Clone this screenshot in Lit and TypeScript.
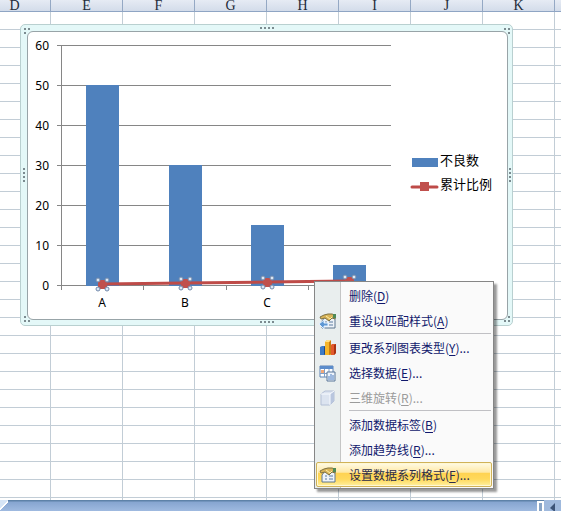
import { LitElement, html, svg, css, nothing } from "lit";
import { customElement } from "lit/decorators.js";
import { classMap } from "lit/directives/class-map.js";

const columns = ["D", "E", "F", "G", "H", "I", "J", "K", "L"];
const ticks = [0, 10, 20, 30, 40, 50, 60];
const bars = [
  { name: "A", value: 50, line: 0.25 },
  { name: "B", value: 30, line: 0.5 },
  { name: "C", value: 15, line: 0.75 },
  { name: "", value: 5, line: 1 },
];

const formatIcon = svg`
  <path d="M6 5h10v11H3V9z" fill="#eef3f8" stroke="#5f7690"/>
  <path d="M6 10h2M6 13h2M10 10h4M10 13h4" stroke="#5b7ba0"/>
  <path d="M1 5l4-2 4-1 4 0 3 1v4l-3-1-3 3-4-3-4 1z" fill="#d9b458" stroke="#7d7040"/>
  <path d="M7 4l4 3 2-2" fill="none" stroke="#fff0a8"/>
  <path d="M14 2h3v4h-3z" fill="#4f8a56"/>`;

const icons: Record<string, unknown> = {
  reset: svg`${formatIcon}
    <path d="M0 12l5-4v3h4v3H5v3z" fill="#5d97d4" stroke="#e2f0ff"/>`,
  format: formatIcon,
  chart: svg`
    <path d="M1 8l2-1h3v9H1z" fill="#3d7bc7"/><path d="M5 8l1-1v8l-1 1z" fill="#1d4b8c"/>
    <path d="M6 3l2-2h4v15H6z" fill="#f5b52a"/><path d="M10 3l2-2v14l-2 1z" fill="#c97c12"/><path d="M6 3l2-2h4l-2 2z" fill="#ffe088"/>
    <path d="M12 6l1-1h4v9l-2 2h-3z" fill="#e25a2c"/><path d="M15 6l2-1v9l-2 2z" fill="#a93212"/>`,
  select: svg`
    <path d="M1 2h13v11H1z" fill="#fff" stroke="#5d82b5"/>
    <path d="M1 2h13v3H1z" fill="#5b8ccb"/><path d="M2 6h3v3H2z" fill="#f2a878"/>
    <path d="M1 9.500h13M5.500 5v8M10 5v8" stroke="#7f9fc8"/>
    <path d="M8 8h8v9H8z" fill="#eef4fc" stroke="#5b7698"/>
    <path d="M10 12v4M12 10v6M14 11v5" stroke="#4f7fc1"/>`,
  cube: svg`
    <path d="M2 5l4-3h9v10l-4 4H2z" fill="#dce4f0" stroke="#b4c0d6"/>
    <path d="M11 5l4-3v10l-4 4z" fill="#b9c6de"/>
    <path d="M2 5h9v11M11 5l4-3" fill="none" stroke="#f8fbff"/>`,
};

interface Item {
  text?: string;
  key?: string;
  more?: boolean;
  icon?: string;
  disabled?: boolean;
  active?: boolean;
}

const items: Item[] = [
  { text: "删除", key: "D" },
  { text: "重设以匹配样式", key: "A", icon: "reset" },
  {},
  { text: "更改系列图表类型", key: "Y", more: true, icon: "chart" },
  { text: "选择数据", key: "E", more: true, icon: "select" },
  { text: "三维旋转", key: "R", more: true, icon: "cube", disabled: true },
  {},
  { text: "添加数据标签", key: "B" },
  { text: "添加趋势线", key: "R", more: true },
  { text: "设置数据系列格式", key: "F", more: true, icon: "format", active: true },
];

@customElement("context-menu")
export class ContextMenu extends LitElement {
  static styles = css`
    :host {
      display: block;
      box-sizing: border-box;
      padding: 1px;
      border: 1px solid #868686;
      background: linear-gradient(90deg, #e9eeee 25px, #c5c5c5 25px, #c5c5c5 26px, #fafafa 26px);
      box-shadow: 3px 3px 2px rgba(0, 0, 0, 0.4);
    }
    .item {
      display: grid;
      grid-template-columns: 26px 1fr;
      align-items: center;
      gap: 5px;
      box-sizing: border-box;
      width: 100%;
      height: 25px;
      padding: 0 0 0 1px;
      border: 1px solid transparent;
      border-radius: 2px;
      background: none;
      color: #10186c;
      font: 12px/20px "Noto Sans CJK SC", sans-serif;
      text-align: left;
      white-space: nowrap;
    }
    .item:disabled {
      color: #9b9b9b;
    }
    .active {
      border-color: #d0b258;
      box-shadow: inset 0 0 0 1px #fff8d4;
      background: linear-gradient(#fffbe6, #ffe9a6 40%, #ffd352 45%, #ffd95c 70%, #fff0a0);
      color: #2b2b4a;
    }
    .icon {
      display: block;
      width: 18px;
      height: 18px;
      margin-left: 1px;
    }
    .key {
      text-decoration: underline;
      text-underline-offset: 2px;
    }
    .rule {
      height: 1px;
      margin: 0 1px 1px 33px;
      border: 0;
      background: #c0c0c4;
    }
  `;

  render() {
    return items.map((i) =>
      i.text
        ? html`<button class=${classMap({ item: true, active: !!i.active })} ?disabled=${!!i.disabled}>
            <span>${i.icon ? html`<svg class="icon" viewBox="0 0 18 18" aria-hidden="true">${icons[i.icon]}</svg>` : nothing}</span>
            <span>${i.text}(<span class="key">${i.key}</span>)${i.more ? "..." : ""}</span>
          </button>`
        : html`<hr class="rule" />`
    );
  }
}

@customElement("series-chart")
export class SeriesChart extends LitElement {
  static styles = css`
    :host {
      display: block;
      position: relative;
      box-sizing: border-box;
      padding: 6px 4px 5px 6px;
      border: 1px solid #b9d0d0;
      border-radius: 5px;
      background: #e4f8f8;
    }
    .area {
      display: flex;
      border: 1px solid #98a4a8;
      border-radius: 6px;
      background: #fff;
    }
    .plot {
      display: block;
      flex: none;
      width: 372px;
      height: 287px;
      font: 12px "Noto Sans", sans-serif;
    }
    .legend {
      display: flex;
      flex-direction: column;
      gap: 4px;
      margin: 0;
      padding: 118px 0 0 10px;
      list-style: none;
      font: 13px/20px "Noto Sans CJK SC", sans-serif;
      color: #000;
    }
    .entry {
      display: flex;
      align-items: center;
      gap: 1px;
      white-space: nowrap;
    }
    .swatch {
      display: block;
      width: 29px;
      height: 14px;
    }
    .grip {
      position: absolute;
      display: grid;
      gap: 2px;
    }
    .grip i {
      width: 2px;
      height: 2px;
      background: #7b8b90;
    }
    .top, .bottom { left: 239px; grid-auto-flow: column; }
    .top { top: 2px; }
    .bottom { bottom: 2px; }
    .left, .right { top: 143px; }
    .left { left: 2px; }
    .right { right: 1px; }
    .corner { grid-template-columns: 2px 2px; }
    .nw { left: 3px; top: 3px; }
    .ne { right: 2px; top: 3px; direction: rtl; }
    .sw { left: 3px; bottom: 3px; }
    .se { right: 2px; bottom: 3px; direction: rtl; }
    .sw i:nth-child(2), .se i:nth-child(2) { grid-column: 1; }
  `;

  private plot() {
    const y = (v: number) => 253 - v * 4;
    const x = (i: number) => Math.round(74.3 + i * 82.3);
    return html`<svg class="plot" viewBox="0 0 372 287" role="img" aria-label="不良数 / 累计比例">
      <g stroke="#868686" shape-rendering="crispEdges">
        ${ticks.map((v) => svg`<path d="M29 ${y(v) + 0.5}H363"/>`)}
        <path d="M33.500 13V258" />
        ${[115, 198, 280, 362].map((t) => svg`<path d="M${t + 0.5} 253v5"/>`)}
      </g>
      ${bars.map((b, i) => svg`<rect x=${x(i) - 16} y=${y(b.value)} width="33" height=${b.value * 4 + 1} fill="#4f81bd"/>`)}
      <polyline points=${bars.map((b, i) => `${x(i)},${y(b.line)}`).join(" ")} fill="none" stroke="#be4b48" stroke-width="3" />
      ${bars.map((b, i) => svg`<g transform="translate(${x(i)} ${y(b.line)})">
        <rect x="-4" y="-4" width="9" height="9" fill="#c0504d"/>
        ${[[-4, -4], [5, -4], [-4, 5], [5, 5]].map(([dx, dy]) => svg`<circle cx=${dx} cy=${dy} r="2" fill="#dbe7f5" stroke="#7188aa"/>`)}
      </g>`)}
      ${ticks.map((v) => svg`<text x="21" y=${y(v) + 5} text-anchor="end">${v}</text>`)}
      ${bars.map((b, i) => (b.name ? svg`<text x=${x(i)} y="275" text-anchor="middle">${b.name}</text>` : nothing))}
    </svg>`;
  }

  render() {
    const dots = (cls: string, n: number) =>
      html`<span class="grip ${cls}">${Array.from({ length: n }, () => html`<i></i>`)}</span>`;
    return html`
      <div class="area">
        ${this.plot()}
        <ul class="legend">
          <li class="entry">
            <svg class="swatch" viewBox="0 0 29 14"><path d="M2 5h26v9H2z" fill="#4f81bd" /></svg>
            不良数
          </li>
          <li class="entry">
            <svg class="swatch" viewBox="0 0 29 14">
              <path d="M2 10h25" stroke="#be4b48" stroke-width="3" stroke-linecap="round" />
              <path d="M10 5h9v9h-9z" fill="#c0504d" />
            </svg>
            累计比例
          </li>
        </ul>
      </div>
      ${["top", "bottom", "left", "right"].map((c) => dots(c, 4))}
      ${["nw", "ne", "sw", "se"].map((c) => dots("corner " + c, 3))}
    `;
  }
}

@customElement("app-root")
export class AppRoot extends LitElement {
  static styles = css`
    :host {
      display: flex;
      flex-direction: column;
      position: relative;
      height: 100vh;
      overflow: hidden;
      background: #fff;
    }
    .heads {
      display: flex;
      flex: none;
      box-sizing: border-box;
      height: 12px;
      margin-left: -21px;
      border-bottom: 1px solid #8fa5c4;
      background: linear-gradient(#e6ebf4, #d3dcea);
      overflow: hidden;
    }
    .head {
      flex: none;
      box-sizing: border-box;
      width: 72px;
      border-right: 1px solid #94a8c4;
      color: #222b38;
      font: 14px/11px "Liberation Serif", serif;
      text-align: center;
    }
    .sheet {
      flex: 1;
      padding: 12px 0 0 20px;
      background:
        linear-gradient(90deg, transparent 71px, #c2cdd6 71px) -21px 0 / 72px 18px,
        linear-gradient(transparent 17px, #c2cdd6 17px) 0 0 / 72px 18px,
        #fff;
    }
    series-chart {
      width: 493px;
    }
    .foot {
      display: flex;
      flex: none;
      height: 11px;
      background: linear-gradient(#5e82a8 1px, #86a5d0 2px, #9fbae0);
    }
    .tab {
      width: 8px;
      height: 11px;
      background: linear-gradient(135deg, #d6e5f6 45%, #fff 46%, #fff 54%, transparent 55%);
    }
    .split {
      box-sizing: border-box;
      width: 7px;
      margin: 1px 0 0 auto;
      border: 2px solid #fff;
      border-bottom: 0;
      background: #88a4c6;
    }
    .scroll {
      width: 17px;
      padding: 0;
      border: 0;
      background: #9fb9dd;
    }
    .arrow {
      display: block;
      width: 17px;
      height: 11px;
    }
    context-menu {
      position: absolute;
      left: 314px;
      top: 281px;
      width: 180px;
    }
  `;

  render() {
    return html`
      <header class="heads">${columns.map((c) => html`<span class="head">${c}</span>`)}</header>
      <main class="sheet"><series-chart></series-chart></main>
      <footer class="foot">
        <span class="tab"></span>
        <span class="split"></span>
        <button class="scroll" aria-label="←">
          <svg class="arrow" viewBox="0 0 17 11"><path d="M11 3v9L6 8z" fill="#3c5478" /></svg>
        </button>
      </footer>
      <context-menu></context-menu>
    `;
  }
}
